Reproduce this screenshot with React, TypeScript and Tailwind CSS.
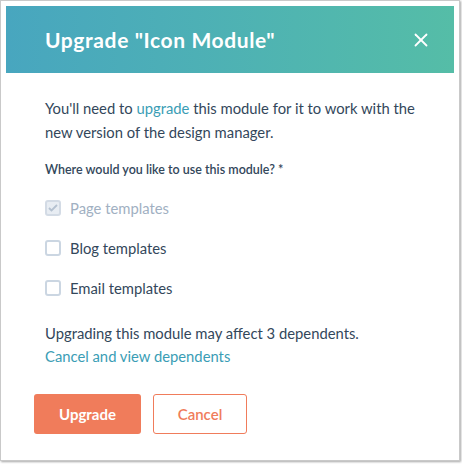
import {X} from 'lucide-react';

const font = {fontFamily: 'Lato, "Open Sans", sans-serif'};

const Checkbox = ({label, checked, disabled}: {label: string; checked?: boolean; disabled?: boolean}) => (
    <label className={`flex items-center gap-[9px] h-[40px] ${disabled ? 'text-[#a1b0c2]' : 'text-[#33475b]'}`}>
        <span
            className={`flex items-center justify-center w-[16px] h-[16px] rounded-[3px] border-2 ${
                disabled ? 'border-[#d3dbe5] bg-[#e8edf3]' : 'border-[#cbd6e2] bg-white'
            }`}
        >
            {checked && (
                <svg width="10" height="8" viewBox="0 0 10 8" fill="none">
                    <path d="M1 4l2.5 2.5L9 1" stroke="#b4c1d0" strokeWidth="1.8" />
                </svg>
            )}
        </span>
        <span className="text-[14.8px]">{label}</span>
    </label>
);

export default function App() {
    return (
        <div className="w-[462px] h-[464px] bg-white" style={font}>
            <div className="w-[460px] h-[461px] border border-[#c9c9c9] shadow-[1px_1px_2px_rgba(0,0,0,0.35)] bg-white p-[5px] pb-0">
                {/* header */}
                <div className="h-[67px] flex items-center justify-between pl-[39px] pr-[22px] bg-gradient-to-r from-[#48a6bf] to-[#55bda7]">
                    <h1 className="text-white text-[21px] font-bold tracking-[0.6px]">Upgrade "Icon Module"</h1>
                    <X className="text-white" size={22} strokeWidth={2} />
                </div>

                {/* body */}
                <div className="pl-[39px] pr-[30px] pt-[23px] text-[#33475b]">
                    <p className="text-[14.8px] leading-[24px]">
                        You'll need to <a className="text-[#3a9db5]">upgrade</a> this module for it to work with the
                        new version of the design manager.
                    </p>
                    <div className="mt-[17px] text-[12.5px] font-semibold">Where would you like to use this module? *</div>
                    <div className="mt-[8px] flex flex-col">
                        <Checkbox label="Page templates" checked disabled />
                        <Checkbox label="Blog templates" />
                        <Checkbox label="Email templates" />
                    </div>
                    <p className="mt-[14px] text-[14.8px] leading-[23px]">Upgrading this module may affect 3 dependents.</p>
                    <a className="block text-[14.8px] leading-[23px] text-[#3a9db5]">Cancel and view dependents</a>
                </div>

                {/* footer */}
                <div className="flex gap-[12px] pl-[28px] mt-[26px]">
                    <button className="w-[107px] h-[40px] rounded-[3px] bg-[#f07c5b] text-white text-[15px] font-bold">
                        Upgrade
                    </button>
                    <button className="w-[94px] h-[40px] rounded-[3px] border border-[#f07c5b] bg-white text-[#f07c5b] text-[15px] font-semibold">
                        Cancel
                    </button>
                </div>
            </div>
        </div>
    );
}
